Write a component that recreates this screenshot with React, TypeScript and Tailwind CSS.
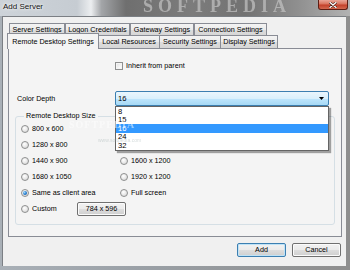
import React from "react";

const topTabs = [
  { label: "Server Settings", w: "w-[56px]" },
  { label: "Logon Credentials", w: "w-[65px]" },
  { label: "Gateway Settings", w: "w-[64px]" },
  { label: "Connection Settings", w: "w-[73px]" },
];

const bottomTabs = [
  { label: "Local Resources", w: "w-[61px]" },
  { label: "Security Settings", w: "w-[61px]" },
  { label: "Display Settings", w: "w-[57px]" },
];

const depths = ["8", "15", "16", "24", "32"];

function Radio({ label, checked, labelClass }: { label: string; checked?: boolean; labelClass?: string }) {
  return (
    <div className="flex items-center h-[16px]">
      <span className="w-[8px] h-[8px] shrink-0 rounded-full border border-[#8e8f8f] bg-[radial-gradient(circle_at_40%_35%,#ffffff_0%,#e4e4e4_60%,#cfcfcf_100%)] flex items-center justify-center">
        {checked && (
          <span className="w-[4px] h-[4px] rounded-full bg-[radial-gradient(circle_at_35%_35%,#9fdcff_0%,#2a7fd0_50%,#0b4f96_100%)]" />
        )}
      </span>
      <span className={`ml-[3px] whitespace-nowrap ${labelClass ?? ""}`}>{label}</span>
    </div>
  );
}

function WinButton({ label, focused, w }: { label: string; focused?: boolean; w: string }) {
  return (
    <button
      className={`${w} h-[14px] rounded-[2px] border flex items-center justify-center leading-none bg-[linear-gradient(180deg,#f2f2f2_0%,#ebebeb_48%,#dddddd_52%,#cfcfcf_100%)] ${
        focused ? "border-[#3c7fb1] shadow-[inset_0_0_0_1px_#bfe3f7]" : "border-[#707070] shadow-[inset_0_0_0_1px_#fbfbfb]"
      }`}
    >
      {label}
    </button>
  );
}

export default function App() {
  return (
    <div className="w-[350px] h-[270px] overflow-hidden bg-[linear-gradient(90deg,#a9b0b7_0%,#9aa0a6_40%,#8e8e8e_100%)] font-['Liberation_Sans',Arial,sans-serif] text-[7.2px] leading-none text-black">
      {/* Title bar */}
      <div className="relative h-[16px] flex items-start justify-between pl-[3px] pr-[2px] bg-[linear-gradient(90deg,#cdd3d9_0%,#c6ccd2_22%,#eceef0_26%,#a3a5a8_29%,#6f6f6f_36%,#7c7c7c_55%,#727272_70%,#8f8f8f_85%,#b3b3b3_100%)] overflow-hidden">
        <span className="absolute left-[143px] top-[-3px] font-['Liberation_Serif',serif] font-bold text-[18px] tracking-[5px] text-[#c4c4c4] opacity-70 blur-[0.6px]">
          SOFTPEDIA
        </span>
        <span className="relative mt-[3px] text-[8px] text-[#111] [text-shadow:0_0_4px_#ffffff,0_0_2px_#ffffff]">
          Add Server
        </span>
        <button className="relative w-[30px] h-[10px] rounded-b-[3px] border border-t-0 border-[#5e1e14] bg-[linear-gradient(180deg,#e9a698_0%,#d9735d_45%,#c3402a_55%,#d2684f_100%)] flex items-center justify-center">
          <svg width="8" height="6" viewBox="0 0 8 6">
            <path d="M1 0.5 L7 5.5 M7 0.5 L1 5.5" stroke="#3a1008" strokeWidth="2.4" strokeLinecap="round" />
            <path d="M1 0.5 L7 5.5 M7 0.5 L1 5.5" stroke="#ffffff" strokeWidth="1.4" strokeLinecap="round" />
          </svg>
        </button>
      </div>

      {/* Client area */}
      <div className="relative ml-[2px] w-[344px] h-[250px] bg-[#f0f0f0] border-l border-t border-[#7b7f84] flex flex-col">
        {/* Tabs row 1 */}
        <div className="mt-[6px] ml-[6px] flex h-[12px]">
          {topTabs.map((t) => (
            <div
              key={t.label}
              className={`${t.w} h-[12px] border border-b-0 border-[#898c95] bg-[linear-gradient(180deg,#f3f3f3_0%,#ebebeb_50%,#dddddd_51%,#d6d6d6_100%)] flex items-center justify-center whitespace-nowrap`}
            >
              {t.label}
            </div>
          ))}
        </div>
        {/* Tabs row 2 */}
        <div className="ml-[4px] flex items-end h-[13px] relative z-10">
          <div className="w-[92px] h-[16px] -mb-px border border-b-0 border-[#898c95] bg-[#f4f4f4] flex items-center justify-center whitespace-nowrap">
            Remote Desktop Settings
          </div>
          {bottomTabs.map((t) => (
            <div
              key={t.label}
              className={`${t.w} h-[13px] border border-b-0 border-l-0 border-[#898c95] bg-[linear-gradient(180deg,#f3f3f3_0%,#ebebeb_50%,#dddddd_51%,#d6d6d6_100%)] flex items-center justify-center whitespace-nowrap`}
            >
              {t.label}
            </div>
          ))}
        </div>

        {/* Tab panel */}
        <div className="ml-[5px] w-[334px] h-[189px] border border-[#898c95] bg-[#f4f4f4] flex flex-col">
          <div className="mt-[12px] ml-[106px] flex items-center h-[9px]">
            <span className="w-[8px] h-[8px] border border-[#8e8f8f] bg-[linear-gradient(135deg,#dcdcdc_0%,#f5f5f5_60%,#ffffff_100%)] shadow-[inset_0_0_0_1px_#f4f4f4]" />
            <span className="ml-[3px]">Inherit from parent</span>
          </div>

          <div className="mt-[21px] ml-[8px] flex items-center h-[15px]">
            <span className="w-[98px]">Color Depth</span>
            <div className="relative z-20 w-[214px] h-[15px]">
              <div className="w-full h-full rounded-[2px] border border-[#3c7fb1] bg-[linear-gradient(180deg,#eaf6fd_0%,#d9f0fc_50%,#bee6fd_51%,#a7d9f5_100%)] flex items-center justify-between pl-[2px] pr-[4px]">
                <span className="text-[7.6px]">16</span>
                <svg width="5" height="3" viewBox="0 0 5 3">
                  <path d="M0 0 H5 L2.5 3 Z" fill="#000" />
                </svg>
              </div>
              <div className="absolute left-0 top-full w-[214px] border border-[#646464] bg-white shadow-[2px_2px_1px_rgba(0,0,0,0.35)] flex flex-col">
                {depths.map((d) => (
                  <div
                    key={d}
                    className={`h-[8.6px] pl-[2px] flex items-center text-[7.6px] ${d === "16" ? "bg-[#3399ff] text-white" : ""}`}
                  >
                    {d}
                  </div>
                ))}
              </div>
            </div>
          </div>

          <fieldset className="mt-[6px] ml-[6px] w-[320px] h-[113px] border border-[#d5dfe5] rounded-[3px] px-[5px] pt-[1px]">
            <legend className="ml-[3px] px-[2px] leading-[8px]">Remote Desktop Size</legend>
            <div className="grid grid-cols-[99px_1fr]">
              <Radio label="800 x 600" />
              <div />
              <Radio label="1280 x 800" />
              <div />
              <Radio label="1440 x 900" />
              <Radio label="1600 x 1200" />
              <Radio label="1680 x 1050" />
              <Radio label="1920 x 1200" />
              <Radio label="Same as client area" checked />
              <Radio label="Full screen" />
              <div className="col-span-2 flex items-center h-[16px]">
                <Radio label="Custom" labelClass="w-[45px]" />
                <WinButton label="784 x 596" w="w-[49px]" />
              </div>
            </div>
          </fieldset>
        </div>

        {/* Dialog buttons */}
        <div className="mt-[6px] mr-[5px] flex justify-end gap-[6px]">
          <WinButton label="Add" focused w="w-[49px]" />
          <WinButton label="Cancel" w="w-[49px]" />
        </div>

        {/* Watermark */}
        <span className="absolute z-30 left-[66px] top-[103px] font-['Liberation_Serif',serif] font-bold text-[10px] tracking-[1px] text-white opacity-50 pointer-events-none">
          SOFTPEDIA
        </span>
        <span className="absolute z-30 left-[95px] top-[121px] text-[5px] text-[#9aa] opacity-40 pointer-events-none">
          www.softpedia.com
        </span>
      </div>
    </div>
  );
}
